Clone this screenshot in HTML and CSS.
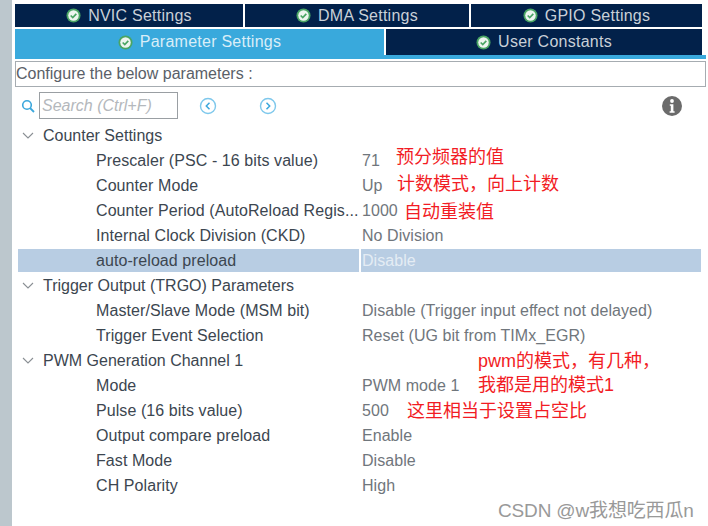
FILE: index.html
```html
<!DOCTYPE html>
<html lang="zh">
<head>
    <title>Parameter Settings</title>
    <link rel="stylesheet" href="styles.css">
</head>
<body>
<div class="strip"></div>
<div class="panel">
    <div class="tabs top-tabs">
        <div class="tab tab-nvic"><svg class="ok" viewBox="0 0 16 16"><circle cx="8" cy="8" r="7.5" fill="#4aa564"/><circle cx="8" cy="8" r="5.6" fill="#eef5f0"/><path d="M5 8l2.2 2.2L11 6.2" fill="none" stroke="#4aa564" stroke-width="1.8"/></svg>NVIC Settings</div>
        <div class="tab tab-dma"><svg class="ok" viewBox="0 0 16 16"><circle cx="8" cy="8" r="7.5" fill="#4aa564"/><circle cx="8" cy="8" r="5.6" fill="#eef5f0"/><path d="M5 8l2.2 2.2L11 6.2" fill="none" stroke="#4aa564" stroke-width="1.8"/></svg>DMA Settings</div>
        <div class="tab tab-gpio"><svg class="ok" viewBox="0 0 16 16"><circle cx="8" cy="8" r="7.5" fill="#4aa564"/><circle cx="8" cy="8" r="5.6" fill="#eef5f0"/><path d="M5 8l2.2 2.2L11 6.2" fill="none" stroke="#4aa564" stroke-width="1.8"/></svg>GPIO Settings</div>
    </div>
    <div class="tabs second-tabs">
        <div class="tab tab-active"><svg class="ok" viewBox="0 0 16 16"><circle cx="8" cy="8" r="7.5" fill="#4aa564"/><circle cx="8" cy="8" r="5.6" fill="#eef5f0"/><path d="M5 8l2.2 2.2L11 6.2" fill="none" stroke="#4aa564" stroke-width="1.8"/></svg>Parameter Settings</div>
        <div class="tab tab-user"><svg class="ok" viewBox="0 0 16 16"><circle cx="8" cy="8" r="7.5" fill="#4aa564"/><circle cx="8" cy="8" r="5.6" fill="#eef5f0"/><path d="M5 8l2.2 2.2L11 6.2" fill="none" stroke="#4aa564" stroke-width="1.8"/></svg>User Constants</div>
    </div>
    <div class="blue-line"></div>
    <div class="configure">Configure the below parameters :</div>
    <div class="toolbar">
        <svg class="search-icon" viewBox="0 0 14 14"><circle cx="6" cy="6" r="4.3" fill="none" stroke="#3ba7dc" stroke-width="1.6"/><path d="M9 9l4 4" stroke="#3ba7dc" stroke-width="1.8"/></svg>
        <div class="search">Search (Ctrl+F)</div>
        <svg class="nav nav-prev" viewBox="0 0 18 18"><circle cx="9" cy="9" r="7.5" fill="none" stroke="#7ec8ec" stroke-width="1.4"/><path d="M10.5 5.8L7.3 9l3.2 3.2" fill="none" stroke="#3ba7dc" stroke-width="1.5"/></svg>
        <svg class="nav nav-next" viewBox="0 0 18 18"><circle cx="9" cy="9" r="7.5" fill="none" stroke="#7ec8ec" stroke-width="1.4"/><path d="M7.5 5.8L10.7 9l-3.2 3.2" fill="none" stroke="#3ba7dc" stroke-width="1.5"/></svg>
        <svg class="info" viewBox="0 0 20 20"><circle cx="10" cy="10" r="10" fill="#6b6b6b"/><circle cx="10" cy="5" r="1.9" fill="#fff"/><path d="M7.8 8.2h3.6v7h1.2v1.6H7.6v-1.6h1.2v-5.4h-1z" fill="#fff"/></svg>
    </div>
    <div class="tree">
        <div class="group"><svg class="chevron" viewBox="0 0 12 8"><path d="M1 1l5 5 5-5" fill="none" stroke="#8a8f94" stroke-width="1.1"/></svg>Counter Settings</div>
        <div class="row"><span class="name">Prescaler (PSC - 16 bits value)</span><span class="value">71</span></div>
        <div class="row"><span class="name">Counter Mode</span><span class="value">Up</span></div>
        <div class="row"><span class="name">Counter Period (AutoReload Regis...</span><span class="value">1000</span></div>
        <div class="row"><span class="name">Internal Clock Division (CKD)</span><span class="value">No Division</span></div>
        <div class="row row-selected"><span class="name">auto-reload preload</span><span class="value">Disable</span></div>
        <div class="group"><svg class="chevron" viewBox="0 0 12 8"><path d="M1 1l5 5 5-5" fill="none" stroke="#8a8f94" stroke-width="1.1"/></svg>Trigger Output (TRGO) Parameters</div>
        <div class="row"><span class="name">Master/Slave Mode (MSM bit)</span><span class="value">Disable (Trigger input effect not delayed)</span></div>
        <div class="row"><span class="name">Trigger Event Selection</span><span class="value">Reset (UG bit from TIMx_EGR)</span></div>
        <div class="group"><svg class="chevron" viewBox="0 0 12 8"><path d="M1 1l5 5 5-5" fill="none" stroke="#8a8f94" stroke-width="1.1"/></svg>PWM Generation Channel 1</div>
        <div class="row"><span class="name">Mode</span><span class="value">PWM mode 1</span></div>
        <div class="row"><span class="name">Pulse (16 bits value)</span><span class="value">500</span></div>
        <div class="row"><span class="name">Output compare preload</span><span class="value">Enable</span></div>
        <div class="row"><span class="name">Fast Mode</span><span class="value">Disable</span></div>
        <div class="row"><span class="name">CH Polarity</span><span class="value">High</span></div>
    </div>
</div>
<div class="note note-psc">预分频器的值</div>
<div class="note note-mode">计数模式，向上计数</div>
<div class="note note-arr">自动重装值</div>
<div class="note note-pwm">pwm的模式，有几种，<br>我都是用的模式1</div>
<div class="note note-pulse">这里相当于设置占空比</div>
<div class="watermark">CSDN @w我想吃西瓜n</div>
</body>
</html>
```

FILE: styles.css
```css
body {
    margin: 0;
    height: 526px;
    overflow: hidden;
    background-color: white;
    font-family: "Liberation Sans", "Noto Sans CJK SC", sans-serif;
    font-size: 16px;
    color: #3c4650;
    position: relative;
    display: flex;
}

.strip {
    width: 12px;
    flex-shrink: 0;
    background-color: #bcc7cd;
}

.panel {
    width: 691px;
    margin-left: 3px;
    padding-top: 4px;
}

.tabs {
    display: flex;
    width: 687px;
    gap: 2px;
}

.top-tabs {
    height: 23px;
    margin-bottom: 2px;
}

.second-tabs {
    height: 26px;
}

.tab {
    display: flex;
    justify-content: center;
    align-items: center;
    background-color: #02214a;
    color: #c9d0d8;
    letter-spacing: 0.25px;
}

.tab-nvic { width: 228px; }
.tab-dma { width: 224px; }
.tab-gpio { width: 231px; }

.tab-active {
    width: 369px;
    background-color: #39a9dc;
    color: #d9eef8;
}

.tab-user { width: 316px; }

.ok {
    width: 15px;
    height: 15px;
    margin-right: 7px;
}

.blue-line {
    height: 4px;
    width: 691px;
    background-color: #39a9dc;
}

.configure {
    box-sizing: border-box;
    width: 691px;
    height: 26px;
    margin-top: 2px;
    border: 1px solid #a6acb1;
    line-height: 24px;
    color: #5a6068;
    white-space: nowrap;
}

.toolbar {
    display: flex;
    align-items: center;
    height: 27px;
    margin-top: 5px;
    padding-left: 6px;
}

.search-icon {
    width: 14px;
    height: 14px;
    margin-right: 4px;
}

.search {
    box-sizing: border-box;
    width: 139px;
    height: 27px;
    border: 1px solid #9a9fa3;
    padding-left: 2px;
    line-height: 25px;
    font-style: italic;
    color: #b4b8bc;
}

.nav {
    width: 18px;
    height: 18px;
}

.nav-prev { margin-left: 21px; }
.nav-next { margin-left: 42px; }

.info {
    width: 20px;
    height: 20px;
    margin-left: 385px;
}

.tree {
    margin-top: 4px;
    width: 686px;
}

.group, .row {
    display: flex;
    align-items: center;
    height: 25px;
    white-space: nowrap;
}

.group {
    color: #3c4650;
}

.chevron {
    width: 12px;
    height: 8px;
    margin: 0 9px 0 7px;
}

.row .name {
    box-sizing: border-box;
    width: 345px;
    padding-left: 81px;
    flex-shrink: 0;
    letter-spacing: 0.08px;
}

.row .value {
    padding-left: 2px;
    color: #70767c;
    letter-spacing: 0.05px;
}

.row-selected {
    height: 23px;
    margin: 1px 0 1px 3px;
    background-color: #b8cde3;
}

.row-selected .name {
    width: 343px;
    padding-left: 78px;
    border-right: 2px solid white;
    height: 23px;
    line-height: 23px;
}

.row-selected .value {
    padding-left: 1px;
    color: #e4ecf4;
}

.note {
    position: absolute;
    color: #f21c24;
    font-size: 18px;
    line-height: 24px;
    white-space: nowrap;
}

.note-psc { left: 396px; top: 145px; }
.note-mode { left: 397px; top: 172px; }
.note-arr { left: 404px; top: 200px; }
.note-pwm { left: 478px; top: 349px; line-height: 24px; }
.note-pulse { left: 407px; top: 399px; }

.watermark {
    position: absolute;
    left: 498px;
    top: 495px;
    color: #999;
    font-size: 19px;
    letter-spacing: -0.15px;
    white-space: nowrap;
}
```
